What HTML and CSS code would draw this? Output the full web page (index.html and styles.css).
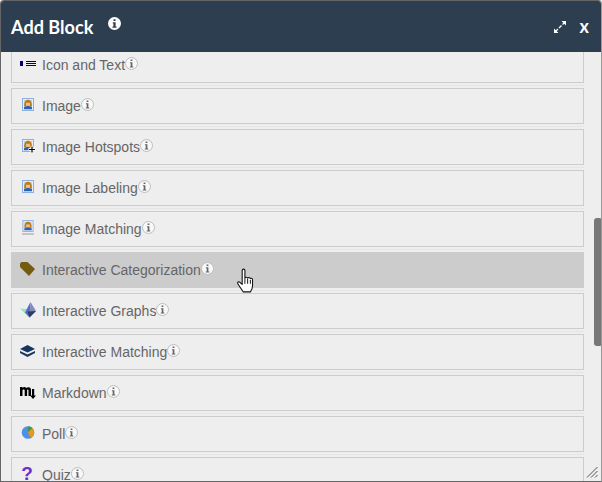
FILE: index.html
```html
<!DOCTYPE html>
<html lang="en">
<head>
<meta charset="utf-8">
<title>Add Block</title>
<link rel="stylesheet" href="styles.css">
</head>
<body>
<svg class="defs" width="0" height="0" aria-hidden="true">
  <symbol id="info" viewBox="0 0 13 13">
    <circle cx="6.500" cy="6.500" r="6" fill="#f8f8f8" stroke="#bdbdbd"/>
    <path d="M5.600 2.500h1.800v1.600H5.600zM4.900 5.200h2.500v4.300h.9v1H4.800v-1h.9V6.200h-.8z" fill="#666"/>
  </symbol>
  <symbol id="img" viewBox="0 0 12 13">
    <rect x=".5" y=".5" width="11" height="12" fill="#e9eef5" stroke="#8db0e0"/>
    <rect x="2" y="2" width="8" height="9" fill="#c9d0d6"/>
    <path d="M2.200 7.500C2.200 3.200 4 1.800 6 1.800s3.800 1.400 3.800 5.700v1H2.200z" fill="#bd7a12"/>
    <rect x="4" y="4.800" width="4" height="3" fill="#f0bd8c"/>
    <path d="M2 11.200V9.300L5 8h2l3 1.300v1.900z" fill="#2a62b8"/>
  </symbol>
</svg>
<main class="window">
  <header class="bar">
    <h1 class="title">Add Block</h1>
    <svg class="bar-info" viewBox="0 0 13 13"><circle cx="6.500" cy="6.500" r="6.500" fill="#fff"/><path d="M5.500 2.300h2v1.800h-2zM4.800 5.200h2.800v4.300h.9v1.300H4.500V9.500h.9V6.500h-.6z" fill="#2c3e50"/></svg>
    <span class="bar-space"></span>
    <svg class="expand" viewBox="0 0 14 14"><path d="M2.500 11.500l9-9" stroke="#fff" stroke-width="1.300" stroke-dasharray="3.500 1.500" fill="none"/><path d="M8.500 1H13v4.500zM1 8.500V13h4.500z" fill="#fff"/></svg>
    <span class="close">x</span>
  </header>
  <section class="body">
    <ul class="list">
      <li class="row"><svg class="icon" viewBox="0 0 16 16"><rect x="-1" y="5" width="3" height="5" fill="#00007a"/><path d="M5 5.500h10M5 7.500h10M5 9.500h10" stroke="#00007a" stroke-width="1"/></svg><span class="label">Icon and Text</span><svg class="tip"><use href="#info"/></svg></li>
      <li class="row"><svg class="icon" viewBox="0 0 16 16"><use href="#img" x="1" y="1" width="12" height="13"/></svg><span class="label">Image</span><svg class="tip"><use href="#info"/></svg></li>
      <li class="row"><svg class="icon" viewBox="0 0 16 16"><use href="#img" x="1" y="1" width="12" height="13"/><path d="M7.500 11.500h7M11 8v7" stroke="#fff" stroke-width="3"/><path d="M8 11.500h6M11 8.500v6" stroke="#000" stroke-width="1.200"/></svg><span class="label">Image Hotspots</span><svg class="tip"><use href="#info"/></svg></li>
      <li class="row"><svg class="icon" viewBox="0 0 16 16"><use href="#img" x="1" y="1" width="12" height="13"/></svg><span class="label">Image Labeling</span><svg class="tip"><use href="#info"/></svg></li>
      <li class="row"><svg class="icon" viewBox="0 0 16 16"><use href="#img" x="1" y="0" width="12" height="12"/><rect x="1" y="13" width="12" height="2" fill="#c4c4c4"/></svg><span class="label">Image Matching</span><svg class="tip"><use href="#info"/></svg></li>
      <li class="row is-hover"><svg class="icon" viewBox="0 0 16 16"><path d="M-1 2.500L.5 1h6L14 8l-6 7-9-9z" fill="#735c0f"/></svg><span class="label">Interactive Categorization</span><svg class="tip"><use href="#info"/></svg></li>
      <li class="row"><svg class="icon" viewBox="0 0 16 16"><path d="M-1 6.500l7 .5 1.500 8z" fill="#8fe8b8"/><path d="M9.500 0L4 10.500l4.500 5z" fill="#5a67d0"/><path d="M9.500 0L15 9l-6.500 6.500z" fill="#7f8bc0"/><path d="M6.500 9.500L15 9l-6.500 6.500z" fill="#2f3d5c"/></svg><span class="label">Interactive Graphs</span><svg class="tip"><use href="#info"/></svg></li>
      <li class="row"><svg class="icon" viewBox="0 0 16 16"><path d="M6.500 2L14 6 6.500 9.500-1 6z" fill="#17365f"/><path d="M-1 8L6.500 11.500 14 8v2L6.500 14-1 10z" fill="#17365f"/></svg><span class="label">Interactive Matching</span><svg class="tip"><use href="#info"/></svg></li>
      <li class="row"><svg class="icon" viewBox="0 0 16 16"><path d="M-1 12V3h2.500v1.100C2.400 2.900 4.300 2.700 5.200 4.100 6.300 2.700 10 2.600 10 5.800V12H7.500V6.300c0-1.200-1.400-1-1.400 0V12H3.700V6.300C3.700 5.100 1.500 5.200 1.500 6.300V12z" fill="#000"/><path d="M11 5h2.200v6.500H15l-3 3.500-3-3.500h2z" fill="#000"/></svg><span class="label">Markdown</span><svg class="tip"><use href="#info"/></svg></li>
      <li class="row"><svg class="icon" viewBox="0 0 16 16"><circle cx="7" cy="7.500" r="6.300" fill="#4f8fe8"/><path d="M7 7.500V1.200a6.300 6.300 0 0 1 4.500 1.900z" fill="#3f9a45"/><path d="M7 7.500l4.500-4.400A6.300 6.300 0 0 1 10 13z" fill="#e59a18"/></svg><span class="label">Poll</span><svg class="tip"><use href="#info"/></svg></li>
      <li class="row"><span class="icon quiz">?</span><span class="label">Quiz</span><svg class="tip"><use href="#info"/></svg></li>
    </ul>
  </section>
  <div class="thumb"></div>
  <svg class="grip" viewBox="0 0 12 12"><path d="M1 11.500L11.500 1M5 11.500L11.500 5M9 11.500l2.500-2.500" stroke="#555" stroke-width="1" fill="none"/></svg>
  <svg class="pointer" viewBox="0 0 18 23"><path d="M5.500 2.200c0-1.600 2.500-1.600 2.500 0v7c.5-1 2.300-1 2.500.2.600-.9 2.200-.8 2.400.4.700-.7 2.100-.4 2.100.9v5.800c0 2.500-1.500 4.800-2 5.500H6.500c-1-1.500-3-4.200-5-7.500-.8-1.300.8-2.400 1.800-1.400L5.500 15z" fill="#fff" stroke="#111" stroke-width="1" stroke-linejoin="round"/><path d="M8 9.500v5M10.500 10v4.500M13 11v3.500" stroke="#111" stroke-width=".9"/></svg>
</main>
</body>
</html>
```
FILE: styles.css
```css
* { box-sizing: border-box; }
html, body { margin: 0; padding: 0; background: #eee; }
.defs { position: absolute; }
.window {
  position: relative;
  width: 602px;
  height: 482px;
  overflow: hidden;
  background: #eee;
  border: 1px solid #666;
  border-right-color: #999;
  border-radius: 4px 4px 0 0;
  display: flex;
  flex-direction: column;
  font-family: "Liberation Sans", Arial, sans-serif;
}
.bar {
  flex: none;
  height: 51px;
  background: #2c3e50;
  color: #fff;
  display: flex;
  align-items: center;
  padding: 0 12px 0 10px;
}
.title {
  margin: 0;
  font: 700 18.1px "Lato", sans-serif;
}
.bar-info { width: 13px; height: 13px; margin: 0 0 6px 15px; }
.bar-space { flex: 1; }
.expand { width: 14px; height: 14px; margin-right: 13px; margin-top: 1px; }
.close { font: 700 18px "Lato", sans-serif; margin-bottom: 1px; }
.body { flex: 1; overflow: hidden; }
.list {
  list-style: none;
  margin: -5px 0 0;
  padding: 0 17px 0 10px;
  display: flex;
  flex-direction: column;
  gap: 5px;
}
.row {
  flex: none;
  height: 36px;
  border: 1px solid #ccc;
  background: #eee;
  display: flex;
  align-items: center;
  padding: 0 0 0 9px;
  font-size: 14px;
  color: #666;
  box-shadow: 0 2px 0 #eee, 0 3px 0 #e5e5e5;
}
.row.is-hover { background: #ccc; border-color: #ccc; }
.icon {
  width: 16px;
  height: 16px;
  flex: none;
  margin-right: 5px;
  margin-top: -2px;
  overflow: visible;
}
.quiz {
  font: 700 19px/16px "Liberation Sans", sans-serif;
  color: #6a2fc9;
  text-align: center;
  padding-right: 4px;
}
.tip { width: 13px; height: 13px; flex: none; margin-top: -3px; }
.thumb {
  position: absolute;
  left: 593px;
  top: 217px;
  width: 8px;
  height: 128px;
  border-radius: 3px;
  background: #777;
}
.grip {
  position: absolute;
  right: 3px;
  bottom: 3px;
  width: 12px;
  height: 12px;
}
.pointer {
  position: absolute;
  left: 235px;
  top: 267px;
  width: 20px;
  height: 25px;
}
```
